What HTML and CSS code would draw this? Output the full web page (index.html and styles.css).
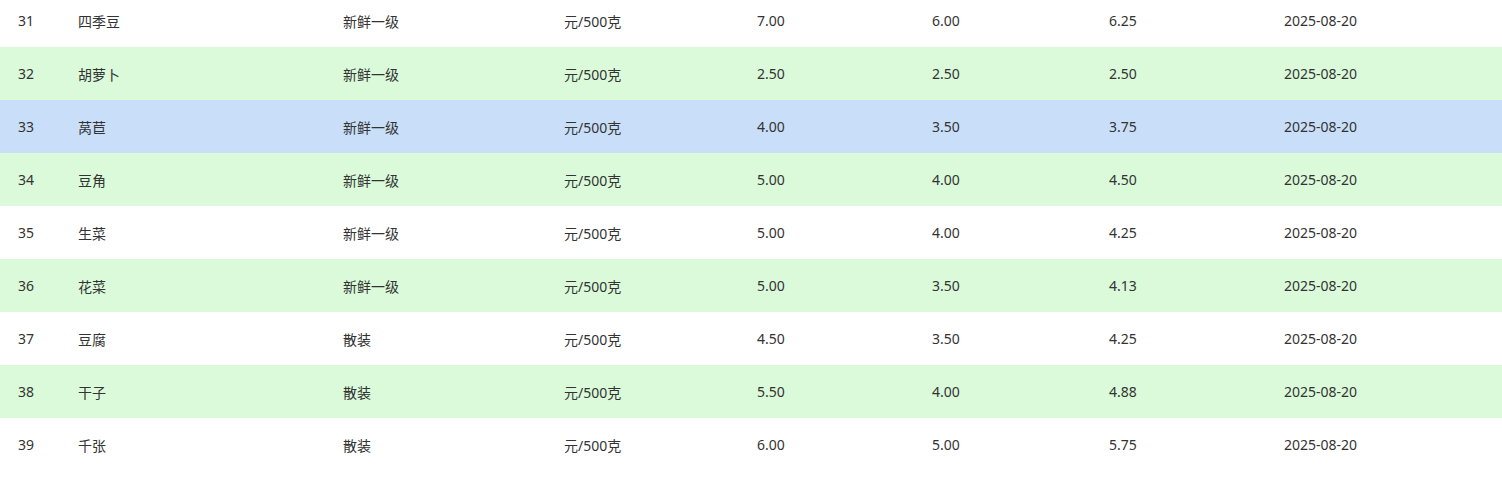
FILE: index.html
```html
<!DOCTYPE html>
<html lang="zh-CN">
<head>
  <meta charset="UTF-8" />
  <meta name="viewport" content="width=device-width, initial-scale=1.0"/>
  <title>蔬菜价格</title>
  <link rel="stylesheet" href="styles.css">
</head>
<body>
  <div class="price-table">
    <div class="row"><span>31</span><span>四季豆</span><span>新鲜一级</span><span>元/500克</span><span>7.00</span><span>6.00</span><span>6.25</span><span>2025-08-20</span></div>
    <div class="row even"><span>32</span><span>胡萝卜</span><span>新鲜一级</span><span>元/500克</span><span>2.50</span><span>2.50</span><span>2.50</span><span>2025-08-20</span></div>
    <div class="row active"><span>33</span><span>莴苣</span><span>新鲜一级</span><span>元/500克</span><span>4.00</span><span>3.50</span><span>3.75</span><span>2025-08-20</span></div>
    <div class="row even"><span>34</span><span>豆角</span><span>新鲜一级</span><span>元/500克</span><span>5.00</span><span>4.00</span><span>4.50</span><span>2025-08-20</span></div>
    <div class="row"><span>35</span><span>生菜</span><span>新鲜一级</span><span>元/500克</span><span>5.00</span><span>4.00</span><span>4.25</span><span>2025-08-20</span></div>
    <div class="row even"><span>36</span><span>花菜</span><span>新鲜一级</span><span>元/500克</span><span>5.00</span><span>3.50</span><span>4.13</span><span>2025-08-20</span></div>
    <div class="row"><span>37</span><span>豆腐</span><span>散装</span><span>元/500克</span><span>4.50</span><span>3.50</span><span>4.25</span><span>2025-08-20</span></div>
    <div class="row even"><span>38</span><span>干子</span><span>散装</span><span>元/500克</span><span>5.50</span><span>4.00</span><span>4.88</span><span>2025-08-20</span></div>
    <div class="row"><span>39</span><span>千张</span><span>散装</span><span>元/500克</span><span>6.00</span><span>5.00</span><span>5.75</span><span>2025-08-20</span></div>
  </div>
</body>
</html>
```

FILE: styles.css
```css
* {
  box-sizing: border-box;
  margin: 0;
  padding: 0;
}

body {
  font-family: "Noto Sans", "Noto Sans CJK SC", sans-serif;
  font-size: 14px;
  color: #333;
  background: #fff;
  overflow: hidden;
}

.price-table {
  margin-top: -6px;
}

.row {
  display: grid;
  grid-template-columns: 60px 265px 221px 193px 175px 177px 175px 1fr;
  height: 53px;
  align-items: center;
  background: #fff;
}

.row span {
  padding-left: 18px;
  white-space: nowrap;
}

.row.even {
  background: #dafada;
}

.row.active {
  background: #c9dff9;
}
```
